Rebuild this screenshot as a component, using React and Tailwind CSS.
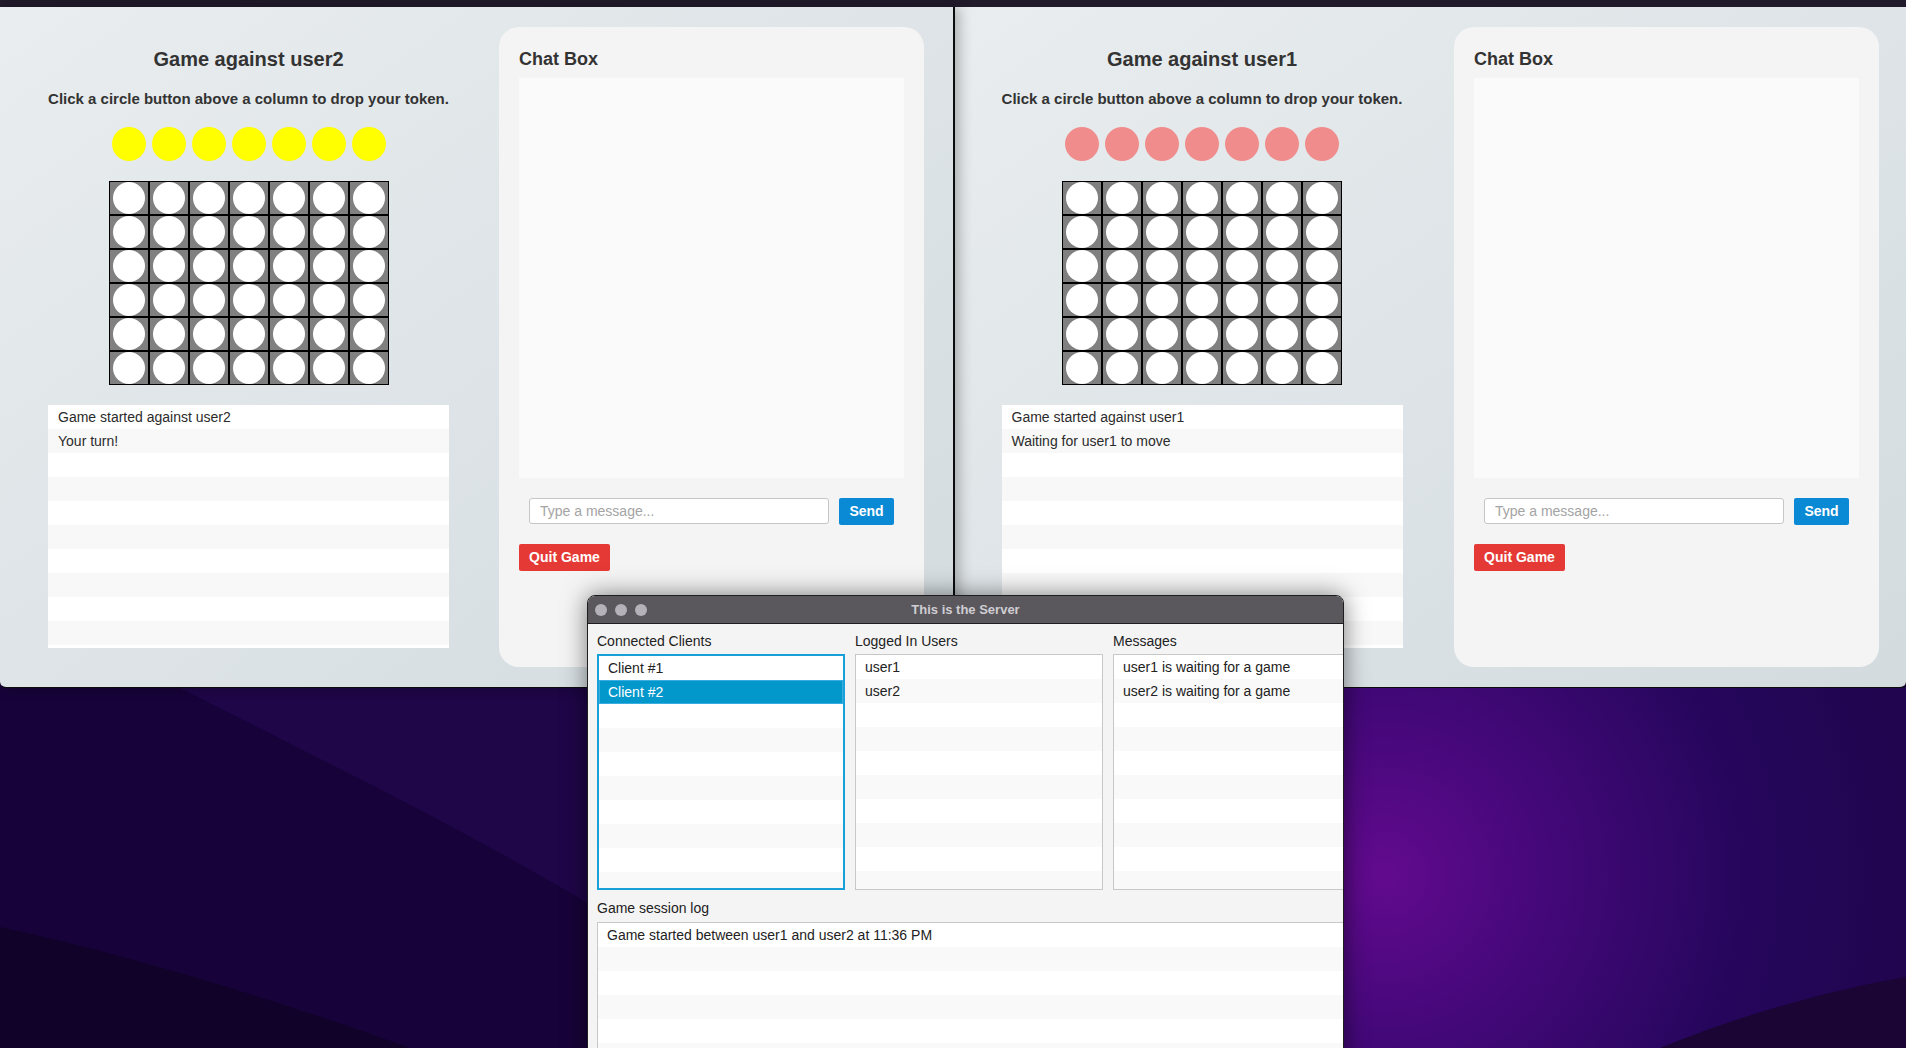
import React from 'react';

const Circles = ({ color }) => (
  <div className="mt-[19px] flex gap-[6px]">
    {Array.from({ length: 7 }).map((_, i) => (
      <div key={i} className={`w-[34px] h-[34px] rounded-full ${color}`} />
    ))}
  </div>
);

const Board = () => (
  <div className="mt-[20px] grid grid-cols-[repeat(7,40px)]">
    {Array.from({ length: 42 }).map((_, i) => (
      <div key={i} className="w-[40px] h-[34px] border border-black bg-[#808080] flex items-center justify-center">
        <div className="w-[32px] h-[32px] rounded-full bg-white" />
      </div>
    ))}
  </div>
);

const GameLog = ({ lines }) => (
  <div className="mt-[20px] w-[401px] h-[243px] overflow-hidden bg-white">
    {Array.from({ length: 11 }).map((_, i) => (
      <div
        key={i}
        className={`h-[24px] px-[10px] text-[14px] leading-[24px] text-[#2b2b2b] ${i % 2 ? 'bg-[#f8f8f8]' : 'bg-white'}`}
      >
        {lines[i] || ''}
      </div>
    ))}
  </div>
);

const GameWindow = ({ opponent, lines, color, className, colClass }) => (
  <div className={`absolute top-[7px] h-[681px] flex bg-linear-to-br from-[#e9edef] to-[#d3dbdf] border-b border-[#0c0c0c] ${className}`}>
    <div className={`w-[499px] flex flex-col items-center pt-[40px] ${colClass}`}>
      <h2 className="text-[20px] leading-[24px] font-bold text-[#333]">Game against {opponent}</h2>
      <p className="mt-[19px] text-[15px] leading-[18px] font-bold text-[#333]">
        Click a circle button above a column to drop your token.
      </p>
      <Circles color={color} />
      <Board />
      <GameLog lines={lines} />
    </div>
    <div className="mt-[20px] w-[425px] h-[640px] rounded-[20px] bg-[#f4f4f4] pt-[21px] px-[20px]">
      <h3 className="text-[18px] leading-[22px] font-bold text-[#333]">Chat Box</h3>
      <div className="mt-[8px] h-[400px] bg-[#fafafa]" />
      <div className="mt-[20px] px-[10px] flex items-start gap-[10px]">
        <input
          type="text"
          placeholder="Type a message..."
          className="w-[300px] h-[26px] px-[10px] bg-white border border-[#c6c6c6] rounded-[3px] text-[14px] text-[#333] placeholder:text-[#a4a4a4] focus:outline-none"
        />
        <button className="w-[55px] h-[27px] rounded-[2px] bg-[#0a89d4] text-white text-[14px] font-bold">Send</button>
      </div>
      <button className="mt-[19px] w-[91px] h-[27px] rounded-[2px] bg-[#e53935] text-white text-[14px] font-bold">
        Quit Game
      </button>
    </div>
  </div>
);

const ListBox = ({ items, selected, focused, rows = 10 }) => (
  <div
    className={`h-[236px] overflow-hidden bg-white ${focused ? 'border-2 border-[#1aa0d8]' : 'border border-[#c8c8c8]'}`}
  >
    {Array.from({ length: rows }).map((_, i) => {
      const sel = selected === i;
      const bg = sel ? 'bg-[#0398cc] text-white shadow-[inset_0_0_0_1px_#3aaee0]' : i % 2 ? 'bg-[#f9f9f9] text-[#222]' : 'bg-white text-[#222]';
      return (
        <div key={i} className={`h-[24px] px-[9px] text-[14px] leading-[24px] whitespace-nowrap ${bg}`}>
          {items[i] || ''}
        </div>
      );
    })}
  </div>
);

const ServerWindow = () => (
  <div className="absolute z-20 left-[587px] top-[595px] w-[757px] h-[470px] overflow-hidden rounded-t-[8px] border border-[#1e1e1e] bg-[#f4f4f4] shadow-[0_0_24px_rgba(0,0,0,0.5)]">
    <div className="h-[28px] grid grid-cols-[1fr_auto_1fr] items-center bg-[#5a585d] border-b border-[#1e1e1e]">
      <div className="flex gap-[8px] pl-[7px]">
        <span className="w-[12px] h-[12px] rounded-full bg-[#b4b2b8]" />
        <span className="w-[12px] h-[12px] rounded-full bg-[#b4b2b8]" />
        <span className="w-[12px] h-[12px] rounded-full bg-[#b4b2b8]" />
      </div>
      <div className="text-[13px] font-bold text-[#cfcdd2]">This is the Server</div>
      <div />
    </div>
    <div className="pl-[9px] pt-[9px]">
      <div className="flex gap-[10px]">
        <div className="w-[248px] shrink-0">
          <div className="h-[17px] mb-[4px] text-[14px] leading-[17px] text-[#222]">Connected Clients</div>
          <ListBox items={['Client #1', 'Client #2']} selected={1} focused />
        </div>
        <div className="w-[248px] shrink-0">
          <div className="h-[17px] mb-[4px] text-[14px] leading-[17px] text-[#222]">Logged In Users</div>
          <ListBox items={['user1', 'user2']} />
        </div>
        <div className="w-[248px] shrink-0">
          <div className="h-[17px] mb-[4px] text-[14px] leading-[17px] text-[#222]">Messages</div>
          <ListBox items={['user1 is waiting for a game', 'user2 is waiting for a game']} />
        </div>
      </div>
      <div className="mt-[10px] h-[17px] mb-[5px] text-[14px] leading-[17px] text-[#222]">Game session log</div>
      <div className="w-[770px] h-[140px] border-t border-l border-[#c8c8c8] bg-white overflow-hidden">
        {Array.from({ length: 6 }).map((_, i) => (
          <div
            key={i}
            className={`h-[24px] px-[9px] text-[14px] leading-[24px] text-[#222] ${i % 2 ? 'bg-[#f9f9f9]' : 'bg-white'}`}
          >
            {i === 0 ? 'Game started between user1 and user2 at 11:36 PM' : ''}
          </div>
        ))}
      </div>
    </div>
  </div>
);

const Wallpaper = () => (
  <svg className="absolute inset-0" width="1906" height="1048" viewBox="0 0 1906 1048">
    <defs>
      <radialGradient id="glow" cx="1385" cy="875" r="520" gradientUnits="userSpaceOnUse">
        <stop offset="0" stopColor="#620a8e" />
        <stop offset="0.3" stopColor="#45087a" />
        <stop offset="0.7" stopColor="#25065c" />
        <stop offset="1" stopColor="#21054f" />
      </radialGradient>
    </defs>
    <rect width="1906" height="1048" fill="#170339" />
    <path d="M180 688 C 330 765 480 835 640 935 L 1100 935 L 1100 688 Z" fill="#1f0648" />
    <path d="M0 927 C 150 960 290 1005 410 1048 L 0 1048 Z" fill="#11022a" />
    <rect x="1200" y="688" width="706" height="360" fill="url(#glow)" />
    <path d="M1660 1048 C 1740 1015 1830 990 1906 977 L 1906 1048 Z" fill="#1a0535" />
  </svg>
);

const App = () => {
  return (
    <div className="relative w-[1906px] h-[1048px] overflow-hidden bg-[#170339] font-['Liberation_Sans',Arial,sans-serif]">
      <Wallpaper />
      <div className="relative h-[7px] bg-[#211a2b]" />
      <GameWindow
        opponent="user2"
        lines={['Game started against user2', 'Your turn!']}
        color="bg-[#ffff00]"
        colClass="pr-[2px]"
        className="z-10 left-0 w-[955px] border-r-2 rounded-bl-[6px] shadow-[4px_0_14px_rgba(0,0,0,0.28)]"
      />
      <GameWindow
        opponent="user1"
        lines={['Game started against user1', 'Waiting for user1 to move']}
        color="bg-[#f08c8c]"
        colClass="pr-[5px]"
        className="z-0 left-[955px] w-[951px] rounded-br-[6px]"
      />
      <ServerWindow />
    </div>
  );
};

export default App;
